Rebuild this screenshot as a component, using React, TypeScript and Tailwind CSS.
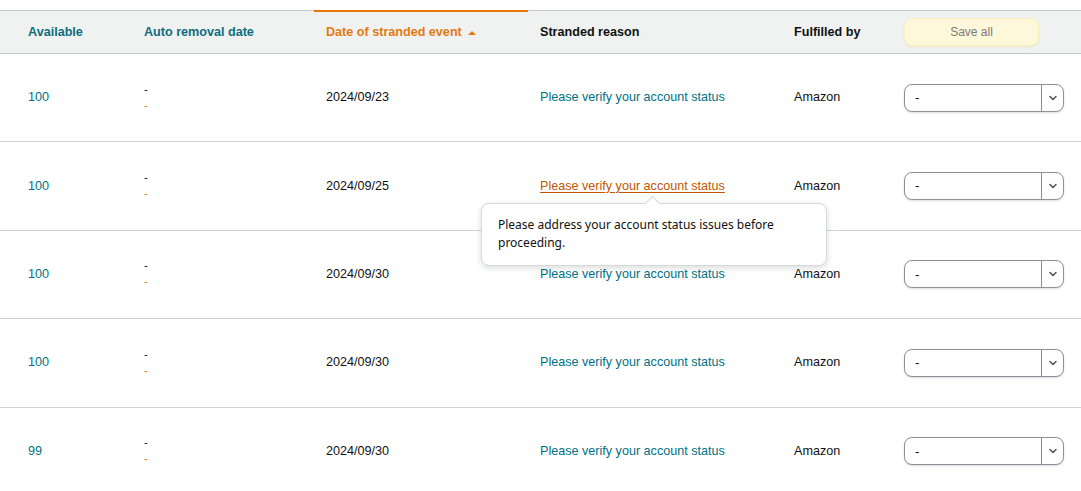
import { ChevronDown } from "lucide-react"

const rows = [
  { available: "100", date: "2024/09/23" },
  { available: "100", date: "2024/09/25", hover: true },
  { available: "100", date: "2024/09/30" },
  { available: "100", date: "2024/09/30" },
  { available: "99", date: "2024/09/30" },
]

function Select() {
  return (
    <div className="flex h-[28px] w-[160px] items-stretch rounded-lg border border-[#8d9096] bg-white shadow-[0_1px_2px_rgba(15,17,17,0.15)]">
      <div className="flex flex-1 items-center pl-[10px] text-[13px] text-[#0f1111]">-</div>
      <div className="flex w-[22px] items-center justify-center border-l border-[#8d9096]">
        <ChevronDown className="h-3 w-3 text-[#555]" strokeWidth={3} />
      </div>
    </div>
  )
}

export default function App() {
  return (
    <div
      className="relative w-[1081px] overflow-hidden bg-white pt-[10px]"
      style={{ fontFamily: '"Liberation Sans", Arial, sans-serif' }}
    >
      {/* header */}
      <div className="flex h-[44px] border-y border-[#c4c7c7] bg-[#f0f2f2] pl-4 text-[12.6px] font-bold">
        <div className="flex w-[116px] items-center px-3 text-[#0e6e7d]">Available</div>
        <div className="flex w-[182px] items-center px-3 text-[#0e6e7d]">Auto removal date</div>
        <div className="-mt-px flex w-[214px] items-center border-t-2 border-[#e77600] px-3 text-[#e47911]">
          Date of stranded event
          <span className="ml-[6px] inline-block h-0 w-0 border-x-[4px] border-b-[4px] border-x-transparent border-b-[#e47911]" />
        </div>
        <div className="flex w-[254px] items-center px-3 text-[#0f1111]">Stranded reason</div>
        <div className="flex w-[110px] items-center px-3 text-[#0f1111]">Fulfilled by</div>
        <div className="flex flex-1 items-center px-3">
          <button className="h-[28px] w-[135px] rounded-lg border border-[#fcefc0] bg-[#fef8da] text-[12px] font-normal text-[#7a7a7a] shadow-[0_1px_2px_rgba(230,200,100,0.3)]">
            Save all
          </button>
        </div>
      </div>

      {/* rows */}
      {rows.map((r, i) => (
        <div key={i} className="flex h-[88.4px] border-b border-[#cfd2d2] pl-4 text-[12.6px] text-[#0f1111]">
          <div className="flex w-[116px] items-center px-3 text-[#007185]">{r.available}</div>
          <div className="flex w-[182px] flex-col justify-center px-3 text-[11px] leading-[16px]">
            <span className="-mt-[2px]">-</span>
            <span className="text-[#e47911]">-</span>
          </div>
          <div className="flex w-[214px] items-center px-3">{r.date}</div>
          <div className="flex w-[254px] items-center px-3">
            {r.hover ? (
              <span className="text-[#c45500] underline underline-offset-2">Please verify your account status</span>
            ) : (
              <span className="text-[#007185]">Please verify your account status</span>
            )}
          </div>
          <div className="flex w-[110px] items-center px-3">Amazon</div>
          <div className="flex flex-1 items-center px-3">
            <Select />
          </div>
        </div>
      ))}

      {/* tooltip */}
      <div className="absolute left-[481px] top-[203px] w-[346px] rounded-lg border border-[#d5d9d9] bg-white px-4 pb-[13px] pt-[12px] shadow-[0_2px_6px_rgba(15,17,17,0.15)]">
        <div className="absolute -top-[6px] left-[165px] h-[11px] w-[11px] rotate-45 border-l border-t border-[#d5d9d9] bg-white" />
        <p
          className="relative text-[12px] leading-[18px] text-[#0f1111]"
          style={{ fontFamily: '"Noto Sans", "Open Sans", sans-serif' }}
        >
          Please address your account status issues before proceeding.
        </p>
      </div>
    </div>
  )
}
